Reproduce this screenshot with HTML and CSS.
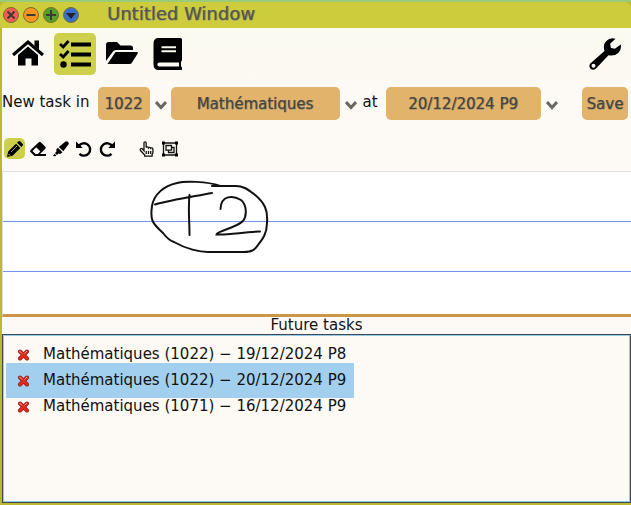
FILE: index.html
```html
<!DOCTYPE html>
<html lang="en">
<head>
<meta charset="utf-8">
<title>Untitled Window</title>
<link rel="stylesheet" href="styles.css">
</head>
<body>
<div class="window">
  <header class="titlebar">
    <button class="dot dot-close" aria-label="Close"><svg viewBox="0 0 14 14"><path d="M3.500 3.500l7 7M10.500 3.500l-7 7"/></svg></button>
    <button class="dot dot-min" aria-label="Minimize"><svg viewBox="0 0 14 14"><path d="M2.500 7h9"/></svg></button>
    <button class="dot dot-max" aria-label="Maximize"><svg viewBox="0 0 14 14"><path d="M2 7h10M7 2v10"/></svg></button>
    <button class="dot dot-shade" aria-label="Shade"><svg viewBox="0 0 14 14"><path class="solid" d="M2.200 5h9.600L7 11z"/></svg></button>
    <h1 class="title">Untitled Window</h1>
  </header>

  <main class="content">
    <nav class="views">
      <button class="view" aria-label="Home"><svg viewBox="0 0 32 32"><path d="M16 8.500L26 17v10.500H19.500V20.500h-6v7H6V17z"/><path d="M1 17L16 4 31 17" fill="none" stroke="#000" stroke-width="3.200"/><path d="M22.500 2.500h4.500v9l-4.500-3.500z"/></svg></button>
      <button class="view active" aria-label="Tasks"><svg viewBox="0 0 32 32"><path d="M12 4.500h20v4H12zM12 14.500h20v4H12zM12 24.500h20v4H12z"/><circle cx="4.500" cy="26.500" r="3.200"/><path d="M1 6l3.200 3L9.500 3M1 16l3.200 3L9.500 13" fill="none" stroke="#000" stroke-width="2.800"/></svg></button>
      <button class="view" aria-label="Files"><svg viewBox="0 0 32 32"><path d="M0 6.500Q0 4 2.500 4h8.500l3.500 3.500H25q2 0 2 2.500v2H10q-2 0-3 1.500L0 23z"/><path d="M9.500 14H31q1.400 0 .7 1.400L26 24.500Q25.200 26 23.500 26H1.500z"/></svg></button>
      <button class="view" aria-label="Book"><svg viewBox="0 0 32 32"><path fill-rule="evenodd" d="M5.500 0H27.500q1.500 0 1.500 1.500V22q0 1-1 1.500v5q1 .3 1 1.500v1.500q0 .5-1 .5H6Q.5 32 .5 26.500V5.500Q.5 0 5.500 0zM8.500 8.300v1.900h14.500V8.300zM8.500 12.300v1.900h14.500v-1.900zM6.500 24.500q-2.200 0-2.200 2T6.500 28.500h19.500V24.500z"/></svg></button>
      <button class="view settings" aria-label="Settings"><svg viewBox="0 0 32 32"><path fill-rule="evenodd" d="M26.500.7Q21 -.7 17.300 3T15.500 13L1.300 25.500Q-.7 28.500 1.600 30.700T7 30.500L19.500 17.300Q25.500 18.500 29.200 14.900T31.700 6.500l-5.800 4.200-4-.8-.8-4.200zM4.500 25.800a2 2 0 1 1 0 4 2 2 0 0 1 0-4z"/></svg></button>
    </nav>

    <form class="new-task">
      <label class="caption" for="room">New task in</label>
      <select id="room" class="chip room"><option>1022</option></select>
      <svg class="chevron" viewBox="0 0 12 12"><path d="M1 3L6 8.500 11 3"/></svg>
      <select class="chip subject" aria-label="Subject"><option>Mathématiques</option></select>
      <svg class="chevron" viewBox="0 0 12 12"><path d="M1 3L6 8.500 11 3"/></svg>
      <label class="caption at" for="slot">at</label>
      <select id="slot" class="chip slot"><option>20/12/2024 P9</option></select>
      <svg class="chevron" viewBox="0 0 12 12"><path d="M1 3L6 8.500 11 3"/></svg>
      <button type="button" class="chip save">Save</button>
    </form>

    <div class="tools">
      <button class="tool active" aria-label="Pencil"><svg viewBox="0 0 16 16"><path d="M0 16l1.200-5.500L9 2.700 13.300 7l-7.800 7.800zM10 1.700l1.300-1.200q1-1 2 0l2.200 2.200q1 1 0 2L14.300 6z"/><path d="M4 11l6-6" fill="none" stroke="#cdd04b" stroke-width=".8"/><path d="M1.500 13l1.700 1.700" stroke="#cdd04b"/></svg></button>
      <button class="tool" aria-label="Eraser"><svg viewBox="0 0 16 16"><path fill-rule="evenodd" d="M.5 9L8.800 1.200q1-.8 2 0l4.500 4.600q.8 1 0 2L10 13h6v2H4.500L.5 11q-.8-1 0-2zM6.200 6.300L2.500 10l3 3h2.200l2.700-2.500z"/></svg></button>
      <button class="tool" aria-label="Highlighter"><svg viewBox="0 0 16 16"><path d="M5.800 6L12.500.6q1-.8 2 0l.9.900q.8 1 0 2L10.300 10.200zM4.800 6.800l4.700 4.500L7.200 13l-1.700-.4L4 14 2 12l1.500-1.500L3.200 8.700zM1.600 12.800l1.700 1.700L2.500 15.300 0 15z"/></svg></button>
      <button class="tool" aria-label="Undo"><svg viewBox="0 0 16 16"><path d="M2.800 5A6.200 6.200 0 1 1 3.500 12.800" fill="none" stroke="#000" stroke-width="2.400"/><path d="M0 .5V7h6.700z"/></svg></button>
      <button class="tool" aria-label="Redo"><svg viewBox="0 0 16 16"><path d="M13.200 5A6.200 6.200 0 1 0 12.500 12.800" fill="none" stroke="#000" stroke-width="2.400"/><path d="M16 .5V7H9.300z"/></svg></button>
      <button class="tool pointer" aria-label="Hand"><svg viewBox="0 0 16 16"><path class="line" d="M5 9.700V2q0-1.200 1.100-1.200T7.200 2v4.500q.3-.8 1.200-.7 1 .1 1.100 1 .4-.6 1.200-.5.9.1 1 .9.400-.5 1.200-.3 1 .3 1 1.400V11q0 1.500-.8 2.700V15.200H5.700V14L1.500 9.500Q.7 8 2 7.500q.9-.3 1.500.5zM7.200 10v3M9.500 10v3M11.700 10v3"/></svg></button>
      <button class="tool" aria-label="Select group"><svg viewBox="0 0 16 16"><path class="line" d="M1.500 2h13v12h-13zM4 4.500h5.500v4.700H4zM9.500 6.500H12v5H6.500V9.200"/><path d="M0 .5h3v3H0zM13 .5h3v3h-3zM0 12.500h3v3H0zM13 12.500h3v3h-3z"/></svg></button>
    </div>

    <section class="paper" aria-label="Notes">
      <svg class="ink" width="290" height="110" viewBox="3 172 290 110">
        <path d="M220 186C207 181 184 181 177 183C164 186 154 194 152 206C150 220 152 223 163 233C166 237 171 241 174 242C186 249 200 252 208 252H244C253 252 255 249 258 245C262 240 267 234 267 223C268 210 265 203 254 194C247 189 243 186 236 186L212 186"/>
        <path d="M155 204.500C171 200 191 197 212 193M189.500 195C188 209 189.500 222 189.500 235"/>
        <path d="M220.500 209C221 195 233 195 241 200C247 205 247 216 243 221C236 228 217 231 216.500 234.500C230 235 243 232 260 231.500"/>
      </svg>
    </section>

    <section class="future">
      <h2 class="heading">Future tasks</h2>
      <ul class="list">
        <li class="item"><button class="remove" aria-label="Delete"><svg viewBox="0 0 13 12"><path class="edge" d="M3 2.500l7 7M10 2.500l-7 7"/><path class="core" d="M3 2.500l7 7M10 2.500l-7 7"/><path class="shine" d="M2.800 2.200l2 2M9.800 2.200l-2 2"/></svg></button>Mathématiques (1022) − 19/12/2024 P8</li>
        <li class="item selected"><button class="remove" aria-label="Delete"><svg viewBox="0 0 13 12"><path class="edge" d="M3 2.500l7 7M10 2.500l-7 7"/><path class="core" d="M3 2.500l7 7M10 2.500l-7 7"/><path class="shine" d="M2.800 2.200l2 2M9.800 2.200l-2 2"/></svg></button>Mathématiques (1022) − 20/12/2024 P9</li>
        <li class="item"><button class="remove" aria-label="Delete"><svg viewBox="0 0 13 12"><path class="edge" d="M3 2.500l7 7M10 2.500l-7 7"/><path class="core" d="M3 2.500l7 7M10 2.500l-7 7"/><path class="shine" d="M2.800 2.200l2 2M9.800 2.200l-2 2"/></svg></button>Mathématiques (1071) − 16/12/2024 P9</li>
      </ul>
    </section>
  </main>
</div>
</body>
</html>
```
FILE: styles.css
```css
* {
  box-sizing: border-box;
}

body {
  margin: 0;
  background: #9acb78;
  font: 15px/18px "DejaVu Sans", sans-serif;
  color: #111;
}

button,
select {
  margin: 0;
  padding: 0;
  border: 0;
  background: none;
  font: inherit;
}

svg {
  display: block;
}

.window {
  display: flex;
  flex-direction: column;
  min-height: 100vh;
  padding: 0 0 2px 2px;
  border-top: 2px solid #9acb78;
  background: #bcb92f;
}

.titlebar {
  display: flex;
  flex: none;
  align-items: center;
  gap: 4px;
  height: 26px;
  margin-left: -2px;
  padding-left: 3px;
  border-radius: 6px 6px 0 0;
  background: #cccc3d;
}

.dot {
  width: 16px;
  height: 16px;
  border: 1px solid #75702c;
  border-radius: 50%;
}

.dot svg {
  width: 14px;
  height: 14px;
  fill: none;
  stroke: #3b3a35;
  stroke-width: 2;
}

.dot .solid {
  fill: #222;
  stroke: none;
}

.dot-close { background: #fa5a55; }
.dot-min { background: #fb9420; }
.dot-max { background: #57a02a; }
.dot-shade { background: #3a6fcb; }

.title {
  margin: 0 0 0 24px;
  font-size: 18px;
  font-weight: normal;
  line-height: 22px;
  padding-bottom: 2px;
  color: #55554d;
  text-shadow: 1px 0 rgb(85 85 77 / 50%), 0 1px rgb(140 140 150 / 50%);
}

.content {
  display: flex;
  flex: 1;
  flex-direction: column;
  background: #fdf9f4;
}

.views {
  display: flex;
  gap: 5px;
  padding: 5px 5px 12px;
  background: linear-gradient(#fafaf0, #fdf9f4);
}

.view {
  padding: 5px;
  border-radius: 5px;
}

.view svg {
  width: 32px;
  height: 32px;
}

.view.active,
.tool.active {
  background: #cdd04b;
}

.settings {
  margin-left: auto;
}

.new-task {
  display: flex;
  align-items: center;
  padding-right: 3px;
}

.caption {
  padding-bottom: 4px;
}

.at {
  margin-left: 2px;
}

.chip {
  height: 33px;
  border-radius: 5px;
  background: #e2b36b;
  color: #44433d;
  text-align: center;
  text-align-last: center;
  text-shadow: 1px 0 rgb(68 67 61 / 40%), 0 1px rgb(90 110 130 / 40%);
  appearance: none;
}

.room {
  width: 52px;
  margin-left: 8px;
}

.subject {
  width: 169px;
}

.slot {
  width: 155px;
  margin-left: 8px;
}

.save {
  width: 46px;
  margin-left: auto;
}

.chevron {
  width: 12px;
  height: 12px;
  margin: 2px 4px 0 5px;
  fill: none;
  stroke: #686761;
  stroke-width: 3;
}

.tools {
  display: flex;
  gap: 2px;
  padding: 18px 2px 12px;
}

.tool {
  padding: 3px 2px 2px 3px;
  border-radius: 5px;
}

.tool svg {
  width: 16px;
  height: 16px;
}

.tool .line {
  fill: none;
  stroke: #111;
  stroke-width: 1.3;
}

.pointer {
  margin-left: 17px;
}

.paper {
  height: 146px;
  border-top: 1px solid #ddd;
  border-left: 1px solid #ddd;
  border-bottom: 3px solid #cc9649;
  background: #fff linear-gradient(#7496ed 1px, #fff 1px) 0 -1px / 100% 50px;
}

.ink {
  fill: none;
  stroke: #111;
  stroke-width: 2;
  stroke-linecap: round;
}

.future {
  display: flex;
  flex: 1;
  flex-direction: column;
}

.heading {
  margin: 0;
  font-size: 15px;
  font-weight: normal;
  line-height: 17px;
  text-align: center;
}

.list {
  display: flex;
  flex: 1;
  flex-direction: column;
  align-items: flex-start;
  margin: 0;
  padding: 6px 3px;
  border: 1px solid #424850;
  box-shadow: inset 0 0 0 1px #94cae8;
  list-style: none;
}

.item {
  display: flex;
  align-items: center;
  gap: 13px;
  padding: 0 8px 0 11px;
  line-height: 26px;
}

.selected {
  margin: -4px 0 -5px;
  padding-top: 4px;
  padding-bottom: 5px;
  background: #a3cfee;
}

.remove {
  padding-top: 2px;
}

.remove svg {
  width: 13px;
  height: 12px;
  fill: none;
  stroke-linecap: round;
}

.edge {
  stroke: #8e2020;
  stroke-width: 4;
}

.core {
  stroke: #e5281c;
  stroke-width: 2.5;
}

.shine {
  stroke: #f5aaa2;
  stroke-width: 1;
}
```
